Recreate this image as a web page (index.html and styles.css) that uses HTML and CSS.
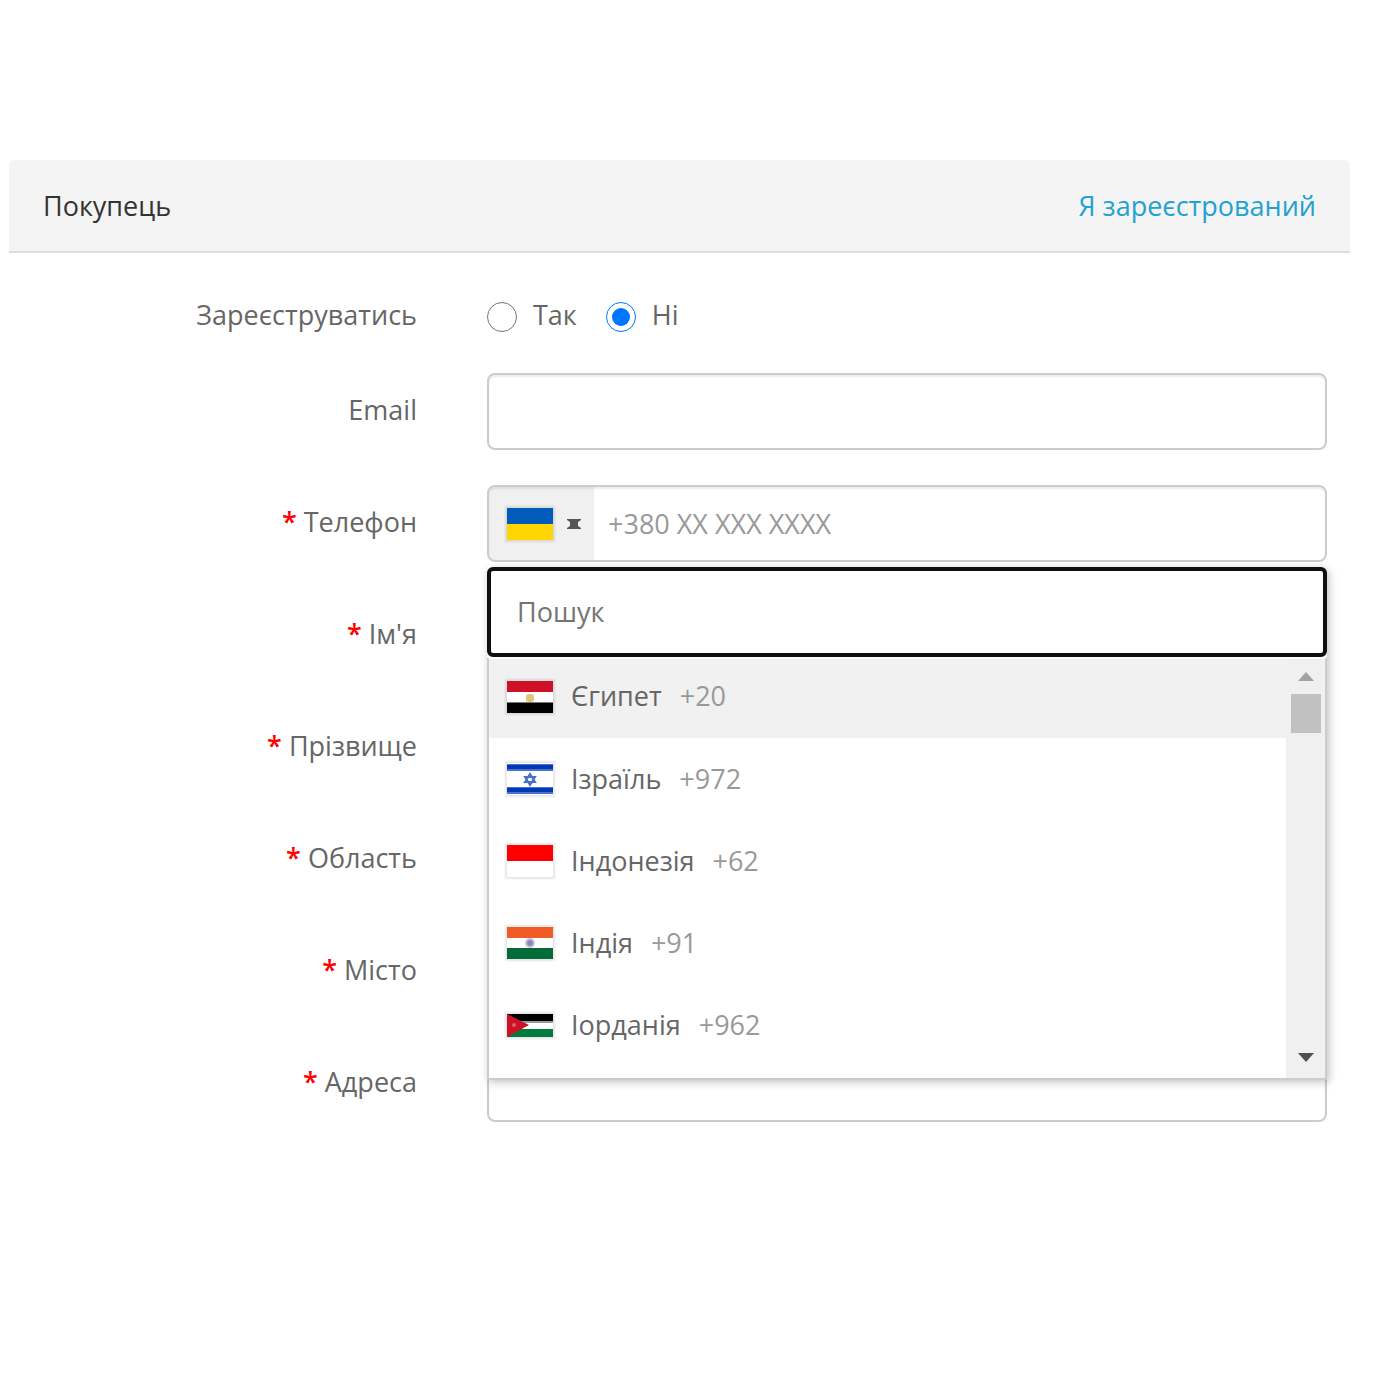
FILE: index.html
```html
<!DOCTYPE html>
<html lang="uk">
<head>
    <meta charset="UTF-8">
    <meta name="viewport" content="width=device-width, initial-scale=1.0">
    <title>Покупець</title>
    <link rel="stylesheet" href="styles.css">
</head>
<body>

<div class="panel">
    <div class="panel-header">
        <h1>Покупець</h1>
        <a href="#">Я зареєстрований</a>
    </div>

    <form class="panel-body">
        <div class="form-row radio-row" role="radiogroup" aria-labelledby="registerLabel">
            <span class="label" id="registerLabel">Зареєструватись</span>
            <div class="radios">
                <input type="radio" name="register" id="registerYes" value="1">
                <label for="registerYes">Так</label>
                <input type="radio" name="register" id="registerNo" value="0" checked>
                <label for="registerNo">Ні</label>
            </div>
        </div>

        <div class="form-row">
            <label class="label" for="email">Email</label>
            <input class="field" type="email" id="email">
        </div>

        <div class="form-row">
            <label class="label required" for="phone">Телефон</label>
            <div class="phone">
                <div class="field phone-field">
                    <button type="button" class="country-button" aria-label="Україна" aria-expanded="true">
                        <svg class="flag" viewBox="0 0 46 32">
                            <rect width="46" height="32" fill="#ffd500"/>
                            <rect width="46" height="16" fill="#005bbb"/>
                        </svg>
                        <svg class="caret" viewBox="0 0 14 10">
                            <path d="M0 0H14V1L11 3V7L14 9V10H0V9L3 7V3L0 1Z" fill="#555"/>
                        </svg>
                    </button>
                    <input type="tel" id="phone" placeholder="+380 XX XXX XXXX">
                </div>

                <!-- Country list -->
                <div class="dropdown">
                    <input class="search" type="text" placeholder="Пошук" aria-label="Пошук">
                    <div class="dropdown-body">
                        <ul class="countries">
                            <li class="active">
                                <svg class="flag" viewBox="0 0 46 32">
                                    <rect width="46" height="32" fill="#fff"/>
                                    <rect width="46" height="11" fill="#ce1126"/>
                                    <rect y="21" width="46" height="2" fill="#777"/>
                                    <rect y="22" width="46" height="10" fill="#000"/>
                                    <rect x="19" y="13" width="8" height="8" rx="3" fill="#dfc575"/>
                                </svg>
                                <span>Єгипет</span>
                                <span class="code">+20</span>
                            </li>
                            <li>
                                <svg class="flag" viewBox="0 0 46 32">
                                    <rect width="46" height="32" fill="#fff"/>
                                    <rect y="1" width="46" height="7" fill="#4a72cc"/>
                                    <rect y="2" width="46" height="4" fill="#0038b8"/>
                                    <rect y="24" width="46" height="7" fill="#4a72cc"/>
                                    <rect y="25" width="46" height="4" fill="#0038b8"/>
                                    <path d="M23 11L28 19H18ZM23 22L18 14H28Z" fill="none" stroke="#4a70cc" stroke-width="2"/>
                                </svg>
                                <span>Ізраїль</span>
                                <span class="code">+972</span>
                            </li>
                            <li>
                                <svg class="flag" viewBox="0 0 46 32">
                                    <rect width="46" height="32" fill="#fff"/>
                                    <rect width="46" height="16" fill="#f00"/>
                                </svg>
                                <span>Індонезія</span>
                                <span class="code">+62</span>
                            </li>
                            <li>
                                <svg class="flag" viewBox="0 0 46 32">
                                    <rect width="46" height="32" fill="#fff"/>
                                    <rect width="46" height="11" fill="#f15b25"/>
                                    <rect y="21" width="46" height="11" fill="#046a38"/>
                                    <circle cx="23" cy="16" r="5" fill="#c5c5e0"/>
                                    <circle cx="23" cy="16" r="3" fill="#8888be"/>
                                </svg>
                                <span>Індія</span>
                                <span class="code">+91</span>
                            </li>
                            <li>
                                <svg class="flag flag-wide" viewBox="0 0 46 23">
                                    <rect width="46" height="23" fill="#fff"/>
                                    <rect width="46" height="9" fill="#999"/>
                                    <rect width="46" height="7" fill="#000"/>
                                    <rect y="15" width="46" height="8" fill="#007a3d"/>
                                    <path d="M0 0L22 11L0 23Z" fill="#ce1126"/>
                                    <circle cx="7" cy="11" r="2" fill="#e0606e"/>
                                </svg>
                                <span>Іорданія</span>
                                <span class="code">+962</span>
                            </li>
                        </ul>
                        <div class="scrollbar">
                            <svg viewBox="0 0 16 9"><path d="M8 0L16 9H0Z" fill="#a3a3a3"/></svg>
                            <div class="thumb"></div>
                            <svg viewBox="0 0 16 9"><path d="M0 0H16L8 9Z" fill="#505050"/></svg>
                        </div>
                    </div>
                </div>
            </div>
        </div>

        <div class="form-row">
            <label class="label required" for="firstName">Ім'я</label>
            <input class="field" type="text" id="firstName">
        </div>
        <div class="form-row">
            <label class="label required" for="lastName">Прізвище</label>
            <input class="field" type="text" id="lastName">
        </div>
        <div class="form-row">
            <label class="label required" for="region">Область</label>
            <input class="field" type="text" id="region">
        </div>
        <div class="form-row">
            <label class="label required" for="city">Місто</label>
            <input class="field" type="text" id="city">
        </div>
        <div class="form-row">
            <label class="label required" for="address">Адреса</label>
            <input class="field" type="text" id="address">
        </div>
    </form>
</div>

</body>
</html>
```
FILE: styles.css
```css
* {
    box-sizing: border-box;
}
body {
    margin: 0;
    padding: 160px 50px 160px 9px;
    background-color: #fff;
    color: #666;
    font-family: "Open Sans", sans-serif;
    font-size: 27px;
    line-height: 36px;
}
input, button {
    font: inherit;
    color: inherit;
}
.panel-header {
    display: flex;
    justify-content: space-between;
    align-items: center;
    height: 93px;
    padding: 0 34px;
    background-color: #f4f4f4;
    border-bottom: 2px solid #ddd;
    border-radius: 6px 6px 0 0;
}
h1 {
    margin: 0;
    color: #333;
    font-size: 27px;
    font-weight: 400;
}
a {
    color: #23a1d1;
    text-decoration: none;
}
.panel-body {
    display: flex;
    flex-direction: column;
    gap: 35px;
    padding: 42px 23px 0 0;
}
.form-row {
    display: grid;
    grid-template-columns: 34fr 70fr;
    column-gap: 70px;
    align-items: center;
}
.radio-row {
    height: 43px;
}
.label {
    padding-bottom: 3px;
    text-align: right;
}
.required::before {
    content: "* ";
    color: #f00;
    font-weight: 600;
}
.radios {
    display: flex;
    align-items: center;
}
.radios label {
    padding: 0 29px 3px 16px;
}
.radios input {
    width: 30px;
    height: 30px;
    margin: 0;
    accent-color: #0075ff;
}
.field {
    width: 100%;
    height: 77px;
    padding: 0 26px;
    background-color: #fff;
    border: 2px solid #ccc;
    border-radius: 8px;
    box-shadow: inset 0 2px 2px rgba(0, 0, 0, 0.08);
}
.phone {
    position: relative;
}
.phone-field {
    display: flex;
    padding: 0;
}
.phone-field input {
    flex: 1;
    min-width: 0;
    padding: 0 14px;
    background: none;
    border: none;
}
.phone-field input::placeholder {
    color: #999;
}
.country-button {
    display: flex;
    align-items: center;
    gap: 14px;
    padding: 0 13px 0 18px;
    background-color: rgba(0, 0, 0, 0.06);
    border: none;
    border-radius: 6px 0 0 6px;
}
.flag {
    flex: none;
    width: 46px;
    height: 32px;
    box-shadow: 0 0 2px 2px rgba(0, 0, 0, 0.1);
}
.flag-wide {
    height: 23px;
}
.caret {
    width: 14px;
    height: 10px;
}
.dropdown {
    position: absolute;
    top: 82px;
    left: 0;
    right: 0;
    z-index: 1;
    background-color: #fff;
    border-radius: 6px 6px 0 0;
    box-shadow: 2px 2px 9px rgba(0, 0, 0, 0.25);
}
.search {
    display: block;
    width: 100%;
    height: 90px;
    padding: 0 26px 2px;
    background-color: #fff;
    border: 4px solid #101010;
    border-radius: 6px;
    outline: none;
}
.search::placeholder {
    color: #757575;
}
.dropdown-body {
    display: flex;
    border: 2px solid #ccc;
    border-top: 2px solid #fff;
}
.countries {
    flex: 1;
    margin: 0;
    padding: 0 0 12px;
    list-style: none;
}
.countries li {
    display: flex;
    align-items: center;
    gap: 18px;
    height: 82px;
    padding: 0 18px;
}
.countries span {
    padding-bottom: 1px;
}
.countries .active {
    height: 79px;
    padding-bottom: 4px;
    background-color: #f1f1f1;
}
.code {
    color: #999;
}
.scrollbar {
    display: flex;
    flex-direction: column;
    align-items: center;
    width: 39px;
    padding: 13px 0 16px;
    background-color: #f0f0f0;
}
.scrollbar svg {
    width: 16px;
    height: 9px;
}
.thumb {
    width: 30px;
    height: 39px;
    margin: 13px 0 auto;
    background-color: #c1c1c1;
}
```
